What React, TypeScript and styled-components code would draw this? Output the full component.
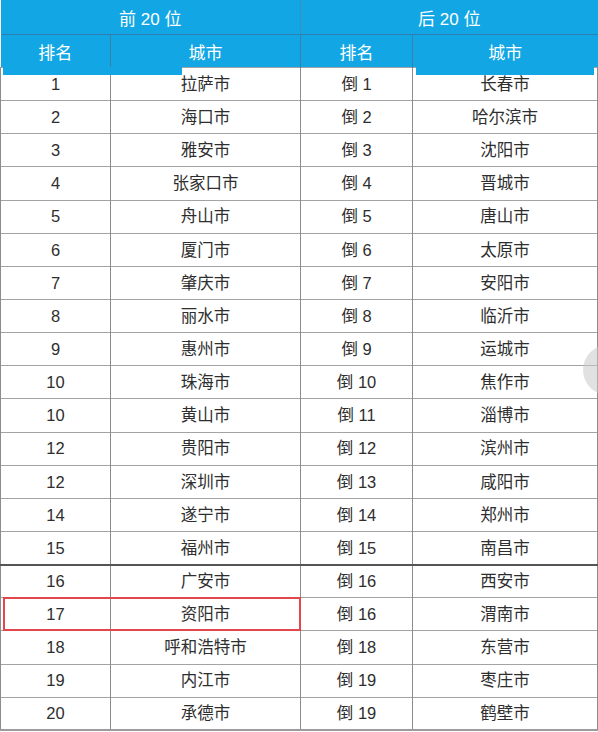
import React from "react";
import styled, {createGlobalStyle} from "styled-components";

const BLUE = "#12a7e4";
const ROW_H = 33.15;

const GlobalStyle = createGlobalStyle`
  html, body {
    margin: 0;
    padding: 0;
    background: #ffffff;
  }
  body {
    font-family: "Liberation Sans", "Noto Sans CJK SC", sans-serif;
  }
`;

const Page = styled.div`
  position: relative;
  width: 598px;
  height: 732px;
  overflow: hidden;
  background: #ffffff;
`;

const Table = styled.table`
  width: 597px;
  border-collapse: collapse;
  table-layout: fixed;
`;

const TopHead = styled.th`
  height: 34px;
  padding: 0;
  background: ${BLUE};
  color: #ffffff;
  font-size: 17px;
  font-weight: normal;
  border-right: 1px solid #3f8db8;
  border-bottom: 1px solid #2c7fae;
  &:last-child {
    border-right: none;
  }
`;

const SubHead = styled.th`
  height: 32px;
  padding: 0;
  background: ${BLUE};
  color: #ffffff;
  font-size: 17px;
  font-weight: normal;
  border-right: 1px solid #3f7fa6;
  &:last-child {
    border-right: none;
  }
`;

const Row = styled.tr<{ $split?: boolean }>`
  height: ${ROW_H}px;
  border-top: ${p => (p.$split ? "2px solid #555555" : "1px solid #a3a3a3")};
`;

const Cell = styled.td`
  padding: 0;
  text-align: center;
  color: #2e2e2e;
  font-size: 16.5px;
  line-height: 1;
  border-left: 1px solid #8c8c8c;
  border-right: 1px solid #8c8c8c;
`;

const BottomEdge = styled.tr`
  border-top: 2px solid #9c9c9c;
`;

// blue tabs leaking below the header row
const Overhang = styled.div<{ $left: number; $width: number }>`
  position: absolute;
  top: 67px;
  left: ${p => p.$left}px;
  width: ${p => p.$width}px;
  height: 8px;
  background: ${BLUE};
`;

const Highlight = styled.div`
  position: absolute;
  left: 3px;
  top: 597px;
  width: 294px;
  height: 30px;
  border: 2px solid #e2474a;
`;

const ScrollKnob = styled.div`
  position: absolute;
  left: 583px;
  top: 345px;
  width: 50px;
  height: 50px;
  border-radius: 50%;
  background: rgba(200, 200, 200, 0.55);
`;

const rows: [string, string, string, string][] = [
    ["1", "拉萨市", "倒 1", "长春市"],
    ["2", "海口市", "倒 2", "哈尔滨市"],
    ["3", "雅安市", "倒 3", "沈阳市"],
    ["4", "张家口市", "倒 4", "晋城市"],
    ["5", "舟山市", "倒 5", "唐山市"],
    ["6", "厦门市", "倒 6", "太原市"],
    ["7", "肇庆市", "倒 7", "安阳市"],
    ["8", "丽水市", "倒 8", "临沂市"],
    ["9", "惠州市", "倒 9", "运城市"],
    ["10", "珠海市", "倒 10", "焦作市"],
    ["10", "黄山市", "倒 11", "淄博市"],
    ["12", "贵阳市", "倒 12", "滨州市"],
    ["12", "深圳市", "倒 13", "咸阳市"],
    ["14", "遂宁市", "倒 14", "郑州市"],
    ["15", "福州市", "倒 15", "南昌市"],
    ["16", "广安市", "倒 16", "西安市"],
    ["17", "资阳市", "倒 16", "渭南市"],
    ["18", "呼和浩特市", "倒 18", "东营市"],
    ["19", "内江市", "倒 19", "枣庄市"],
    ["20", "承德市", "倒 19", "鹤壁市"],
];

const App: React.FC = () => {
    return (
        <Page>
            <GlobalStyle/>
            <Table>
                <colgroup>
                    <col style={{width: 110}}/>
                    <col style={{width: 190}}/>
                    <col style={{width: 112}}/>
                    <col style={{width: 185}}/>
                </colgroup>
                <thead>
                <tr>
                    <TopHead colSpan={2}>前 20 位</TopHead>
                    <TopHead colSpan={2}>后 20 位</TopHead>
                </tr>
                <tr>
                    <SubHead>排名</SubHead>
                    <SubHead>城市</SubHead>
                    <SubHead>排名</SubHead>
                    <SubHead>城市</SubHead>
                </tr>
                </thead>
                <tbody>
                {rows.map((r, i) => (
                    <Row key={i} $split={i === 15}>
                        {r.map((c, j) => <Cell key={j}>{c}</Cell>)}
                    </Row>
                ))}
                <BottomEdge/>
                </tbody>
            </Table>
            <Overhang $left={3} $width={179}/>
            <Overhang $left={416} $width={178}/>
            <Highlight/>
            <ScrollKnob/>
        </Page>
    );
};

export default App;
